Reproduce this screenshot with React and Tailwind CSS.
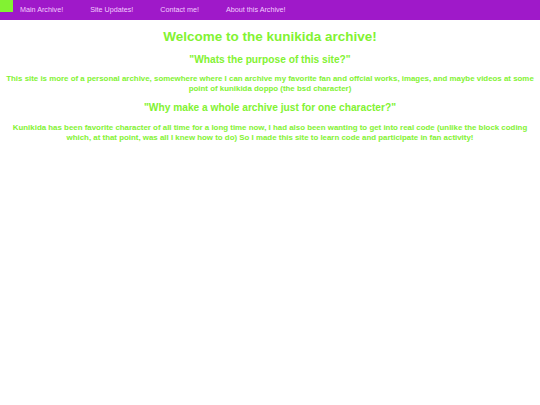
import React from 'react'

const links = ['Main Archive!', 'Site Updates!', 'Contact me!', 'About this Archive!']

export default function App() {
  return (
    <div className="min-h-screen bg-white" style={{ fontFamily: '"Liberation Sans", Arial, sans-serif' }}>
      {/* Nav */}
      <nav className="flex h-[20px] items-start bg-[#9f19c9]">
        <div className="h-[12px] w-[13px] bg-[#82f232]" />
        <ul className="ml-[7px] flex gap-[27px] pt-[5px]">
          {links.map((l) => (
            <li key={l} className="text-[7.2px] leading-[10px] text-[#f3ccff]">
              {l}
            </li>
          ))}
        </ul>
      </nav>

      <main className="px-[4px] text-center font-bold text-[#82f232]">
        <h1 className="mt-[8px] text-[13.5px] leading-[18px]">Welcome to the kunikida archive!</h1>
        <h2 className="mt-[7px] text-[10.2px] leading-[14px]">"Whats the purpose of this site?"</h2>
        <p className="mt-[7px] text-[7.9px] leading-[10px]">
          This site is more of a personal archive, somewhere where I can archive my favorite fan and offcial works, images, and maybe videos at some point of kunikida doppo (the bsd character)
        </p>
        <h2 className="mt-[7px] text-[10.2px] leading-[14px]">"Why make a whole archive just for one character?"</h2>
        <p className="mt-[8px] text-[7.9px] leading-[10px]">
          Kunikida has been favorite character of all time for a long time now, I had also been wanting to get into real code (unlike the block coding which, at that point, was all I knew how to do) So I made this site to learn code and participate in fan activity!
        </p>
      </main>
    </div>
  )
}
